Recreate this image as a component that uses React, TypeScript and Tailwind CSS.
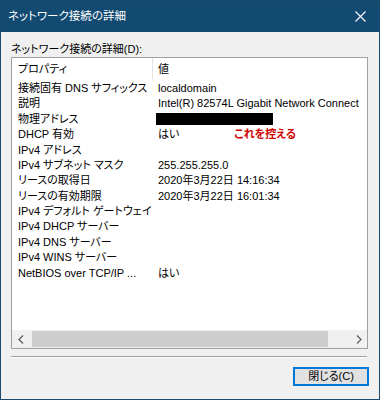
import React from "react";

const rows: [string, React.ReactNode][] = [
  ["接続固有 DNS サフィックス", "localdomain"],
  ["説明", "Intel(R) 82574L Gigabit Network Connect"],
  ["物理アドレス", <span className="block w-[117px] h-[12px] bg-black mt-[1px] ml-[-2px]" />],
  ["DHCP 有効", <span className="flex">はい<span className="ml-[55px] text-[#d00000] font-bold">これを控える</span></span>],
  ["IPv4 アドレス", ""],
  ["IPv4 サブネット マスク", "255.255.255.0"],
  ["リースの取得日", "2020年3月22日 14:16:34"],
  ["リースの有効期限", "2020年3月22日 16:01:34"],
  ["IPv4 デフォルト ゲートウェイ", ""],
  ["IPv4 DHCP サーバー", ""],
  ["IPv4 DNS サーバー", ""],
  ["IPv4 WINS サーバー", ""],
  ["NetBIOS over TCP/IP ...", "はい"],
];

export default function App() {
  return (
    <div
      className="w-[380px] h-[400px] border border-[#1a4a6e] bg-[#f0f0f0] flex flex-col overflow-hidden text-[11px] text-black [font-feature-settings:'palt']"
      style={{ fontFamily: '"Liberation Sans", "Noto Sans CJK JP", sans-serif' }}
    >
      <div className="h-[31px] shrink-0 bg-[#124a71] flex items-center justify-between pl-[7px] pr-[13px] text-white">
        <span className="text-[11.5px] leading-none">ネットワーク接続の詳細</span>
        <svg width="11" height="11" viewBox="0 0 11 11">
          <path d="M0.5 0.5 L10.5 10.5 M10.5 0.5 L0.5 10.5" stroke="white" strokeWidth="1.1" />
        </svg>
      </div>
      <div className="flex flex-col px-[10px] flex-1">
        <div className="mt-[9px] h-[16px] leading-[16px]">ネットワーク接続の詳細(D):</div>
        <div className="h-[292px] border border-[#a0a0a0] bg-white flex flex-col mr-[1px]">
          <div className="flex-1 overflow-hidden">
            <div className="flex h-[22.5px] items-center">
              <div className="w-[141px] pl-[6px] h-full flex items-center border-r border-[#e5e5e5]">プロパティ</div>
              <div className="pl-[5px]">値</div>
            </div>
            {rows.map(([k, v], i) => (
              <div key={i} className="flex h-[15.4px] items-center whitespace-nowrap">
                <div className="w-[141px] pl-[6px] shrink-0 overflow-hidden">{k}</div>
                <div className="pl-[5px] flex-1 overflow-hidden">{v}</div>
              </div>
            ))}
          </div>
          <div className="h-[18px] flex items-stretch bg-[#f0f0f0]">
            <div className="w-[18px] flex items-center justify-center">
              <svg width="6" height="9" viewBox="0 0 6 9">
                <path d="M5 0.5 L1 4.5 L5 8.5" stroke="#606060" strokeWidth="1.3" fill="none" />
              </svg>
            </div>
            <div className="flex-1 flex items-stretch pl-[2px] pr-[22px] py-[1px]">
              <div className="flex-1 bg-[#cdcdcd]" />
            </div>
            <div className="w-[17px] flex items-center justify-center">
              <svg width="6" height="9" viewBox="0 0 6 9">
                <path d="M1 0.5 L5 4.5 L1 8.5" stroke="#606060" strokeWidth="1.3" fill="none" />
              </svg>
            </div>
          </div>
        </div>
        <div className="mt-[7px] mr-[2px] border-t border-[#a0a0a0] border-b border-b-white" />
        <div className="flex justify-end mt-[9px]">
          <div className="w-[76px] h-[19px] border-2 border-[#0078d7] bg-[#e1e1e1] flex items-center justify-center">
            <div className="leading-none">閉じる(C)</div>
          </div>
        </div>
      </div>
    </div>
  );
}
